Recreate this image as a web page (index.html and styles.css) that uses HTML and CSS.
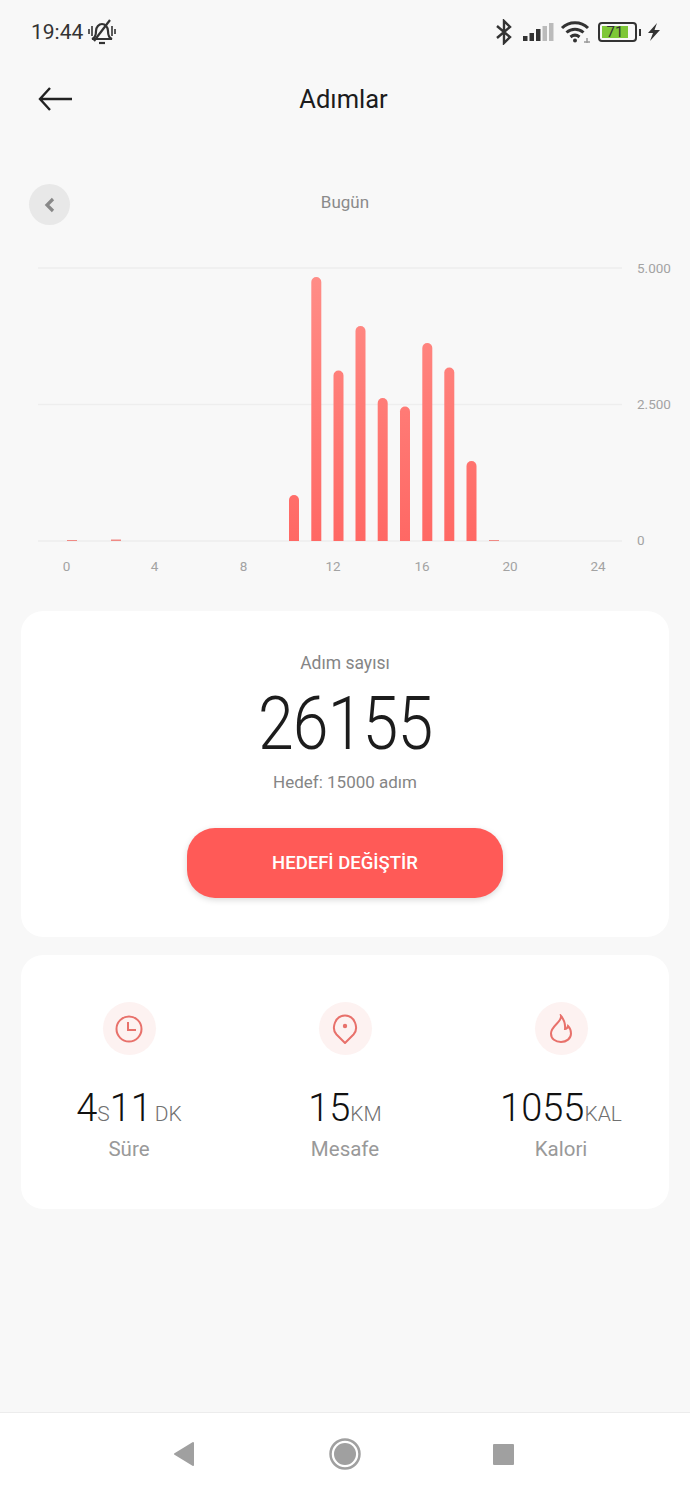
FILE: index.html
```html
<!DOCTYPE html>
<html lang="en">
<head>
    <meta charset="UTF-8">
    <meta name="viewport" content="width=device-width, initial-scale=1.0">
    <title>Adımlar</title>
    <link rel="stylesheet" href="styles.css">
</head>
<body>

<div class="page">
    <div class="status-bar">
        <div class="status-left">
            <span class="time">19:44</span>
            <svg class="bell" width="30" height="26" viewBox="0 0 30 26" fill="none" stroke="#333" stroke-width="2.200">
                <path d="M5 20c3-1 4-4 4-8 0-4 3-7 6-7s6 3 6 7c0 4 1 7 4 8z" />
                <path d="M12 24h6" />
                <path d="M7 22 23 1" />
                <path d="M2 10v5M5 7v10M25 7v10M28 10v5" stroke-width="1.600" />
            </svg>
        </div>
        <div class="status-right">
            <svg class="bt-icon" width="18" height="26" viewBox="0 0 18 26" fill="none" stroke="#333" stroke-width="2.400">
                <path d="M2 7 15 18 9 24V2l6 6L2 19" />
            </svg>
            <svg width="32" height="20" viewBox="0 0 32 20">
                <rect x="1" y="14" width="4.500" height="5" fill="#333" />
                <rect x="7.500" y="11" width="4.500" height="8" fill="#333" />
                <rect x="14" y="7" width="4.500" height="12" fill="#333" />
                <rect x="20.500" y="4" width="4.500" height="15" fill="#bbb" />
                <rect x="27" y="1" width="4.500" height="18" fill="#bbb" />
            </svg>
            <svg width="32" height="24" viewBox="0 0 32 24" fill="none" stroke="#333" stroke-width="3">
                <path d="M2 8c7-7 19-7 26 0" />
                <path d="M6.500 12.500c5-4.500 12-4.500 17 0" />
                <path d="M10.500 17c3-2.500 6-2.500 9 0" />
                <circle cx="15" cy="20.500" r="2" fill="#333" stroke="none" />
                <path d="M24 22h6M27 18v5" stroke="#999" stroke-width="1.500" />
            </svg>
            <div class="battery">
                <div class="battery-body">
                    <div class="battery-level">71</div>
                </div>
                <div class="battery-tip"></div>
            </div>
            <svg width="14" height="20" viewBox="0 0 14 20">
                <path d="M10 1 1 11h5l-3 8 10-11H7.500z" fill="#333" />
            </svg>
        </div>
    </div>

    <div class="header">
        <svg class="back-arrow" width="36" height="26" viewBox="0 0 36 26" fill="none" stroke="#222" stroke-width="2.400">
            <path d="M35 13H3M13 2 3 13l10 11" />
        </svg>
        <span class="title">Adımlar</span>
    </div>

    <div class="day-row">
        <div class="prev-day">
            <svg width="12" height="16" viewBox="0 0 12 16" fill="none" stroke="#888" stroke-width="3.200">
                <path d="M9 2 3 8l6 6" />
            </svg>
        </div>
        <span class="day-label">Bugün</span>
    </div>

    <svg class="chart" width="690" height="340" viewBox="0 240 690 340">
        <defs>
            <linearGradient id="barFill" gradientUnits="userSpaceOnUse" x1="0" y1="277" x2="0" y2="541">
                <stop offset="0" stop-color="#ff8d87" />
                <stop offset="1" stop-color="#ff6864" />
            </linearGradient>
        </defs>

        <line class="grid-line" x1="38" y1="268" x2="622" y2="268" />
        <line class="grid-line" x1="38" y1="404.500" x2="622" y2="404.500" />
        <line class="grid-line" x1="38" y1="541" x2="622" y2="541" />

        <text class="axis-text" x="637" y="273">5.000</text>
        <text class="axis-text" x="637" y="409">2.500</text>
        <text class="axis-text" x="637" y="545">0</text>

        <rect class="tiny-bar" x="67" y="540" width="10" height="1" />
        <rect class="tiny-bar" x="111" y="539.500" width="10" height="1.500" />
        <rect class="tiny-bar" x="489" y="540" width="10" height="1" />

        <path class="bar" d="M289 541V500a5 5 0 0 1 10 0V541z" />
        <path class="bar" d="M311.300 541V282a5 5 0 0 1 10 0V541z" />
        <path class="bar" d="M333.500 541V375.500a5 5 0 0 1 10 0V541z" />
        <path class="bar" d="M355.500 541V331a5 5 0 0 1 10 0V541z" />
        <path class="bar" d="M377.700 541V403a5 5 0 0 1 10 0V541z" />
        <path class="bar" d="M400 541V411.500a5 5 0 0 1 10 0V541z" />
        <path class="bar" d="M422.300 541V348a5 5 0 0 1 10 0V541z" />
        <path class="bar" d="M444.300 541V372.500a5 5 0 0 1 10 0V541z" />
        <path class="bar" d="M466.500 541V466a5 5 0 0 1 10 0V541z" />

        <text class="axis-text mid" x="66.500" y="571">0</text>
        <text class="axis-text mid" x="154.500" y="571">4</text>
        <text class="axis-text mid" x="243.500" y="571">8</text>
        <text class="axis-text mid" x="333" y="571">12</text>
        <text class="axis-text mid" x="422" y="571">16</text>
        <text class="axis-text mid" x="510" y="571">20</text>
        <text class="axis-text mid" x="598" y="571">24</text>
    </svg>

    <div class="card steps-card">
        <div class="steps-label">Adım sayısı</div>
        <div class="steps-count">26155</div>
        <div class="steps-goal">Hedef: 15000 adım</div>
        <button class="goal-btn" type="button">HEDEFİ DEĞİŞTİR</button>
    </div>

    <div class="card stats-card">
        <div class="stat">
            <div class="stat-icon">
                <svg width="30" height="30" viewBox="0 0 30 30" fill="none" stroke="#e8716b" stroke-width="2">
                    <circle cx="15" cy="15" r="12.500" />
                    <path d="M14 8v8h8" />
                </svg>
            </div>
            <div class="stat-value">4<small>S</small>11<small class="unit-gap">DK</small></div>
            <div class="stat-label">Süre</div>
        </div>
        <div class="stat">
            <div class="stat-icon">
                <svg width="26" height="32" viewBox="0 0 26 32" fill="none" stroke="#e8716b" stroke-width="2">
                    <path d="M13 30 4.500 21.500C-1 15.500 3 2.500 13 2.500s14 13 8.500 19z" stroke-linejoin="round" />
                    <circle cx="13" cy="13" r="2.200" fill="#e8716b" stroke="none" />
                </svg>
            </div>
            <div class="stat-value">15<small>KM</small></div>
            <div class="stat-label">Mesafe</div>
        </div>
        <div class="stat">
            <div class="stat-icon">
                <svg width="26" height="30" viewBox="0 0 26 30" fill="none" stroke="#e8716b" stroke-width="2">
                    <path d="M13 2c1 6-10 10-10 17.500 0 5.500 4.500 8.500 10 8.500s10-3.500 10-8.500c0-3-1-5.500-3-7.500-.5 2-1.500 3-3 3C17.500 10 16 5.500 13 2z" />
                </svg>
            </div>
            <div class="stat-value">1055<small>KAL</small></div>
            <div class="stat-label">Kalori</div>
        </div>
    </div>

    <div class="spacer"></div>

    <div class="nav-bar">
        <svg width="24" height="26" viewBox="0 0 24 26">
            <path d="M21 2 3 13l18 11z" fill="#a0a0a0" stroke="#a0a0a0" stroke-width="2" stroke-linejoin="round" />
        </svg>
        <svg width="32" height="32" viewBox="0 0 32 32">
            <circle cx="16" cy="16" r="14.500" fill="none" stroke="#a0a0a0" stroke-width="2.500" />
            <circle cx="16" cy="16" r="11" fill="#a0a0a0" />
        </svg>
        <div class="nav-square"></div>
    </div>
</div>

</body>
</html>
```

FILE: styles.css
```css
* {
    box-sizing: border-box;
}

body {
    margin: 0;
    background-color: #f8f8f8;
    font-family: Roboto, "Liberation Sans", sans-serif;
}

.page {
    width: 690px;
    height: 1495px;
    display: flex;
    flex-direction: column;
    overflow: hidden;
}

.status-bar {
    height: 64px;
    padding: 0 29px 0 31px;
    display: flex;
    justify-content: space-between;
    align-items: center;
    color: #333;
}

.status-left {
    display: flex;
    align-items: center;
    gap: 4px;
}

.time {
    font-size: 21px;
}

.status-right {
    display: flex;
    align-items: center;
    gap: 6px;
}

.bt-icon {
    margin-right: 3px;
}

.battery {
    display: flex;
    align-items: center;
    gap: 2px;
}

.battery-body {
    width: 39px;
    height: 20px;
    padding: 2px;
    border: 2.500px solid #333;
    border-radius: 4px;
}

.battery-level {
    width: 26px;
    height: 100%;
    background-color: #7ec737;
    color: #333;
    font-size: 15px;
    line-height: 12px;
    text-align: center;
}

.battery-tip {
    width: 2px;
    height: 7px;
    background-color: #333;
}

.header {
    height: 70px;
    padding-left: 37px;
    display: flex;
    align-items: center;
    position: relative;
}

.title {
    position: absolute;
    left: 0;
    right: 3px;
    text-align: center;
    font-size: 25.500px;
    color: #1c1c1c;
}

.day-row {
    margin-top: 50px;
    height: 41px;
    padding-left: 29px;
    display: flex;
    align-items: center;
    position: relative;
}

.prev-day {
    width: 41px;
    height: 41px;
    border-radius: 50%;
    background-color: #e8e8e8;
    display: flex;
    align-items: center;
    justify-content: center;
}

.day-label {
    position: absolute;
    left: 0;
    right: 0;
    top: 8px;
    text-align: center;
    font-size: 17px;
    color: #8a8a8a;
}

.chart {
    display: block;
    margin-top: 15px;
}

.grid-line {
    stroke: #eeeeee;
    stroke-width: 1.500;
}

.axis-text {
    font-size: 13.500px;
    fill: #a3a3a3;
}

.axis-text.mid {
    text-anchor: middle;
}

.bar {
    fill: url(#barFill);
}

.tiny-bar {
    fill: #f08a85;
}

.card {
    margin: 0 21px;
    background-color: #fff;
    border-radius: 22px;
}

.steps-card {
    margin-top: 31px;
    height: 326px;
    padding-top: 42px;
    display: flex;
    flex-direction: column;
    align-items: center;
}

.steps-label {
    font-size: 17.500px;
    line-height: 20px;
    color: #858585;
}

.steps-count {
    margin-top: 9px;
    font-size: 74px;
    font-weight: 300;
    line-height: 84px;
    letter-spacing: -1px;
    color: #1c1c1c;
    transform: scaleX(0.87);
}

.steps-goal {
    margin-top: 6px;
    font-size: 17px;
    line-height: 20px;
    color: #858585;
}

.goal-btn {
    margin-top: 36px;
    width: 316px;
    height: 70px;
    border: none;
    border-radius: 28px;
    background-color: #ff5a57;
    box-shadow: 0 2px 6px rgba(0, 0, 0, 0.15);
    color: #fff;
    font-family: inherit;
    font-size: 18.500px;
    font-weight: 500;
}

.stats-card {
    margin-top: 18px;
    height: 254px;
    padding-top: 47px;
    display: grid;
    grid-template-columns: repeat(3, 216px);
    align-items: start;
}

.stat {
    display: flex;
    flex-direction: column;
    align-items: center;
}

.stat-icon {
    width: 53px;
    height: 53px;
    border-radius: 50%;
    background-color: #fdf2f1;
    display: flex;
    align-items: center;
    justify-content: center;
}

.stat-value {
    margin-top: 30px;
    font-size: 38px;
    font-weight: 300;
    line-height: 46px;
    color: #111;
    white-space: nowrap;
}

.stat-value small {
    font-size: 21px;
    color: #707070;
}

.stat-value .unit-gap {
    margin-left: 3px;
}

.stat-label {
    margin-top: 0;
    font-size: 20.500px;
    line-height: 24px;
    color: #999;
}

.spacer {
    flex: 1;
}

.nav-bar {
    height: 83px;
    padding: 0 176px 0 172px;
    background-color: #fff;
    border-top: 1px solid #ececec;
    display: flex;
    align-items: center;
    justify-content: space-between;
}

.nav-square {
    width: 21px;
    height: 21px;
    border-radius: 1px;
    background-color: #a0a0a0;
}
```
